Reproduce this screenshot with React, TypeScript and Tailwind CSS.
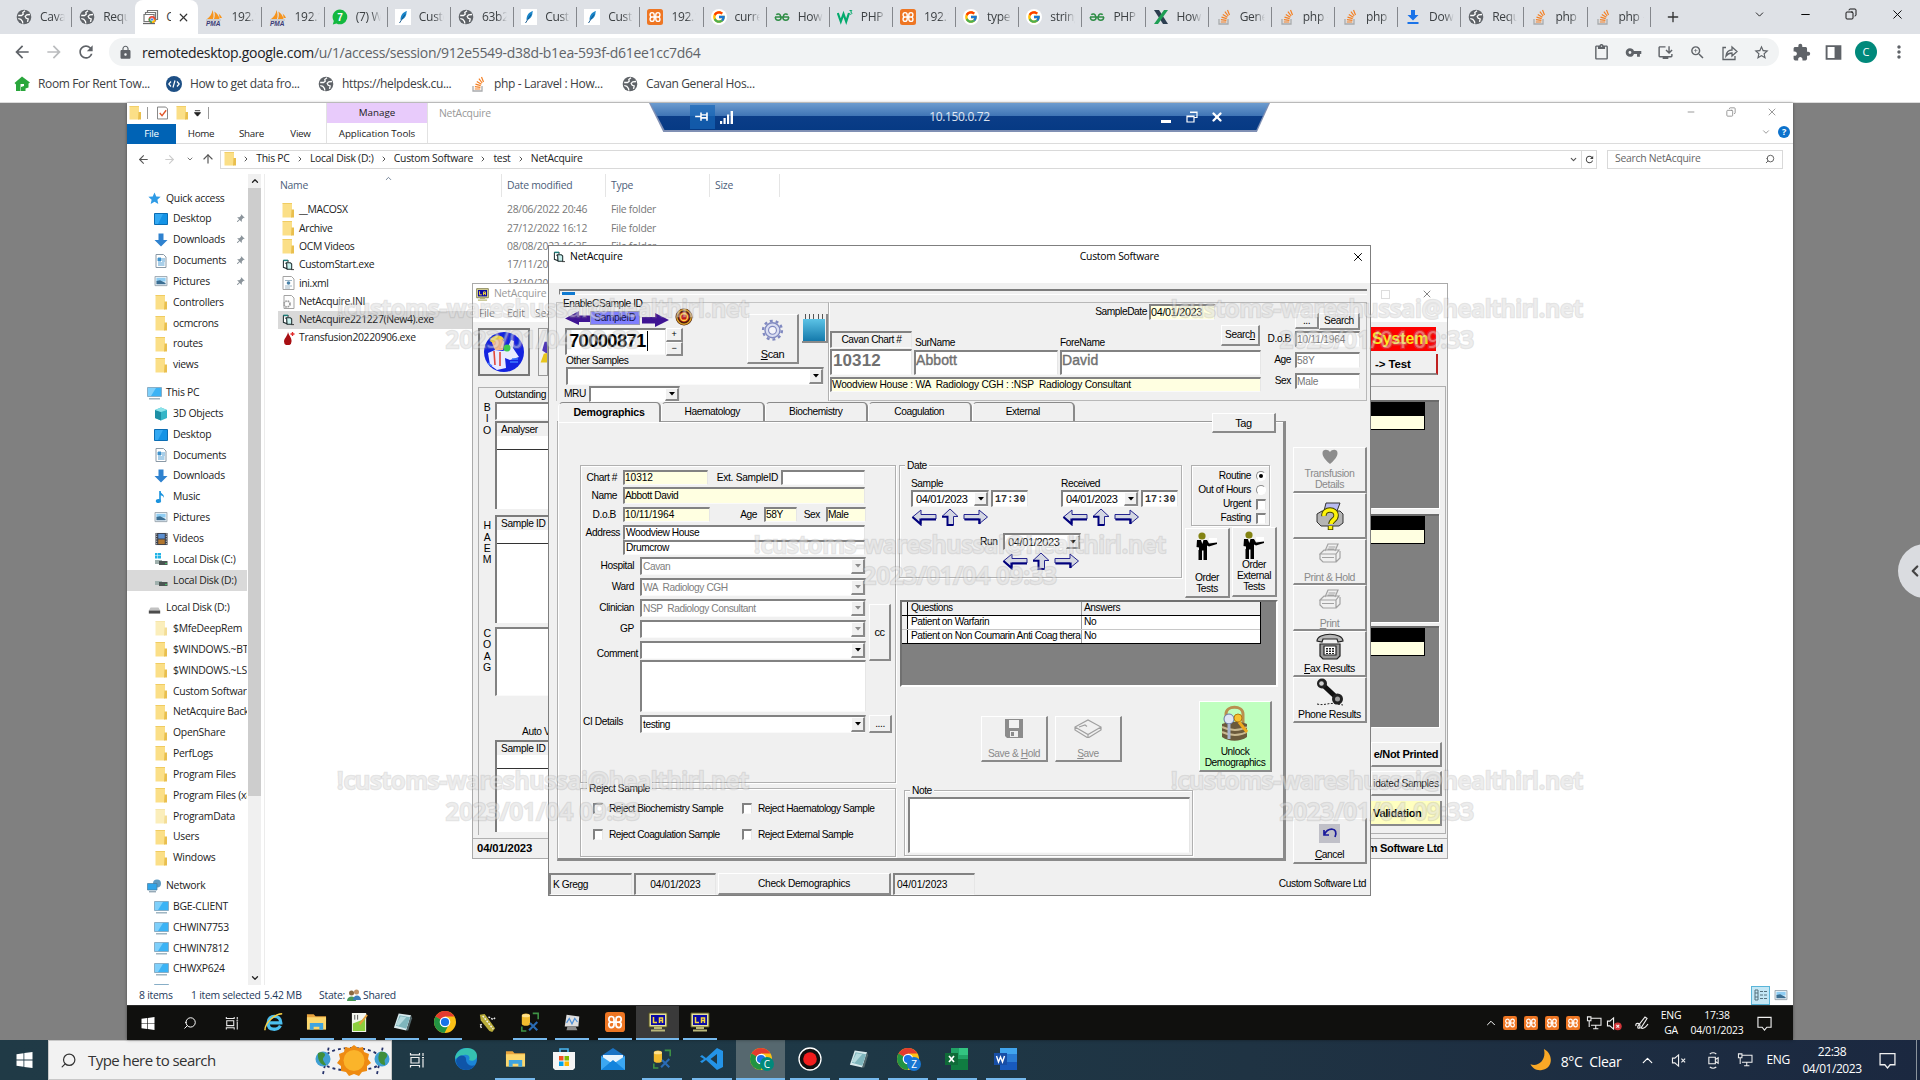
import React from "react";
import { FcGoogle } from "react-icons/fc";
import {
  MdArrowBack, MdArrowForward, MdRefresh, MdLock, MdContentPaste, MdVpnKey, MdInstallDesktop,
  MdZoomIn, MdStarBorder, MdExtension, MdMoreVert, MdPushPin,
} from "react-icons/md";
import { ChevronDown, ChevronUp, ChevronLeft, ChevronRight, Minus, X, Plus, Copy, ArrowLeft, ArrowRight, ArrowUp, Search } from "lucide-react";

type Kids = { children?: React.ReactNode; className?: string };

/* ---------- small drawings ---------- */

const Globe = () => (
  <svg viewBox="0 0 16 16" className="h-4 w-4 shrink-0">
    <circle cx="8" cy="8" r="7.300" fill="#5f6368" />
    <path d="M2.200 6.500h3.300l1.700-1.300-.4-1.700L9 1.800M2.300 9.500l2.500.8 1.700 2.200.3 2M14 5.500l-3.300.3-1.500 1.500 1 2 2 .6-.7 3" fill="none" stroke="#fff" strokeWidth="1.300" />
  </svg>
);

const StackIcon = () => (
  <svg viewBox="0 0 16 16" className="h-4 w-4 shrink-0" fill="none">
    <path d="M3 10v5h9v-5" stroke="#a9abad" strokeWidth="1.300" />
    <path d="M4.800 13h5.500M4.900 10.700l5.500.6M5.500 8.200l5.200 1.500M6.800 5.400l4.600 2.800M8.900 2.700l3.300 4.300M11.500 1l2 5" stroke="#f48024" strokeWidth="1.200" />
  </svg>
);

const Xampp = ({ className = "h-4 w-4" }: Kids) => (
  <svg viewBox="0 0 16 16" className={className + " shrink-0"}>
    <rect width="16" height="16" rx="2.500" fill="#ee7623" />
    <path d="M5 3.600c-2.600 0-2.600 4.400 0 4.400h6c2.600 0 2.600-4.400 0-4.400-1.800 0-2.200 1.400-2.200 2.400v4c0 1 .4 2.400 2.200 2.400 2.600 0 2.600-4.400 0-4.400H5c-2.600 0-2.600 4.400 0 4.400 1.800 0 2.200-1.400 2.200-2.400V6c0-1-.4-2.400-2.200-2.400z" fill="none" stroke="#fff" strokeWidth="1.400" />
  </svg>
);

const Pma = () => (
  <svg viewBox="0 0 18 18" className="h-[18px] w-[18px] shrink-0">
    <path d="M2 11C5 9 7 6 7.500 2c1 3 1.500 6 .5 9zM9 11c1-3 1-5 .3-7.500C12 5 14 8 14.500 11zM14.500 10c0-2-.5-3.500-1-4.500 2 1.500 3 3 3.500 4.500z" fill="#f6941d" />
    <path d="M1 12h15" stroke="#b8b8b8" />
    <text x="1" y="17.500" fontSize="6.500" fontWeight="700" fontStyle="italic" fill="#3b3b75" fontFamily="Liberation Sans">PMA</text>
  </svg>
);

const RdcIcon = () => (
  <svg viewBox="0 0 16 16" className="h-4 w-4 shrink-0" fill="none">
    <path d="M4.500 3V1.500h10v9H13M2.500 5V3.500h10v9" stroke="#777" strokeWidth="1.200" />
    <path d="M1 5.500h10v7H1z" fill="#fff" stroke="#777" strokeWidth="1.200" />
    <path d="M0 14.500h12" stroke="#666" strokeWidth="1.300" />
    <circle cx="9" cy="10.500" r="3.500" fill="#ea4335" />
    <path d="M9 10.500 6 9a3.500 3.500 0 0 0 3 5z" fill="#34a853" />
    <path d="M9 10.500h3.500A3.500 3.500 0 0 1 9 14z" fill="#fbbc05" />
    <circle cx="9" cy="10.500" r="1.500" fill="#4285f4" stroke="#fff" strokeWidth=".6" />
  </svg>
);

const Feather = () => (
  <svg viewBox="0 0 16 16" className="h-4 w-4 shrink-0">
    <rect width="16" height="16" fill="#fff" />
    <path d="M5.500 11C5.500 6 8 3 12 2c-1 2 0 3-1.500 5.500S7.500 10.500 5.500 11z" fill="#1b86c9" />
    <path d="M10 5.500 4.500 14" stroke="#0b4f86" strokeWidth=".9" />
  </svg>
);

const Whats = () => (
  <svg viewBox="0 0 16 16" className="h-4 w-4 shrink-0">
    <path d="M8 .5A7.400 7.400 0 1 1 4.500 14.500L.8 15.500l1-3.600A7.400 7.400 0 0 1 8 .5z" fill="#13b83f" />
    <text x="5.300" y="11.500" fontSize="10" fontWeight="700" fill="#fff" fontFamily="Liberation Sans">7</text>
  </svg>
);

const Gfg = () => (
  <svg viewBox="0 0 16 16" className="h-4 w-4 shrink-0" fill="none" stroke="#2f8d46" strokeWidth="1.500">
    <path d="M1 8h14M7.200 8c0 2-1.200 3.300-3 3.300S1.300 10 1.300 8M6.800 8C6.500 4.500 3.500 4.300 2.300 5.800M8.800 8c0 2 1.200 3.300 3 3.300s2.900-1.300 2.900-3.300M9.200 8c.3-3.500 3.300-3.700 4.500-2.200" />
  </svg>
);

const W3 = () => (
  <svg viewBox="0 0 16 16" className="h-4 w-4 shrink-0" fill="none" stroke="#04aa6d">
    <path d="M.8 4l3 8.500L6.500 5l2.700 7.500L12 4" strokeWidth="2.200" />
    <path d="M12.500 1.500h2.300l-1.200 1.700c2 0 1.600 2.600-.8 2" strokeWidth="1" />
  </svg>
);

const XGreen = () => (
  <svg viewBox="0 0 16 16" className="h-4 w-4 shrink-0">
    <path d="M1 1h5l9 14h-5z" fill="#2c3e50" />
    <path d="M11 1h4L5 15H1z" fill="#1e9e54" />
  </svg>
);

const Dl = () => (
  <svg viewBox="0 0 16 16" className="h-4 w-4 shrink-0" fill="#1a73e8">
    <path d="M6 1h4v5h3.500L8 11.500 2.500 6H6zM2.500 13h11v2h-11z" />
  </svg>
);

const FAV: Record<string, React.ReactNode> = {
  globe: <Globe />, rdc: <RdcIcon />, pma: <Pma />, wa: <Whats />, feather: <Feather />, xampp: <Xampp />,
  g: <span className="flex h-4 w-4 shrink-0 items-center justify-center rounded-full bg-white"><FcGoogle className="h-[14px] w-[14px]" /></span>,
  gfg: <Gfg />, w3: <W3 />, x: <XGreen />, so: <StackIcon />, dl: <Dl />,
};

const Folder = ({ pale = false, className = "h-[15px] w-[12px]" }: { pale?: boolean; className?: string }) => (
  <svg viewBox="0 0 12 15" preserveAspectRatio="none" className={className + " shrink-0"}>
    <path d="M.5.5h9.500v14H.5z" fill={pale ? "#fbeebb" : "#fbdf87"} />
    <path d="M9.500 6.500H12v8H9z" fill={pale ? "#f3dd97" : "#e9bf4e"} />
    <path d="M.5.5h9.500" stroke={pale ? "#f6e6ab" : "#f0cc62"} />
  </svg>
);

const Monitor = () => (
  <svg viewBox="0 0 15 14" className="h-[14px] w-[15px] shrink-0">
    <path d="M.5 1.500h14v9H.5z" fill="#3bb3f5" stroke="#7e9bb0" strokeWidth=".7" />
    <path d="M1 2h8l-5 8H1z" fill="#7fd0fb" />
    <path d="M2 12.800h11" stroke="#8fa9b8" strokeWidth="1.300" />
  </svg>
);
const DesktopI = () => (
  <svg viewBox="0 0 14 12" className="h-[12px] w-[14px] shrink-0"><path d="M.5.5h13v11H.5z" fill="#1493e6" stroke="#0b6db3" /><path d="M1 1h8L4 11H1z" fill="#33a9f3" /></svg>
);
const DownI = () => (
  <svg viewBox="0 0 14 14" className="h-[14px] w-[14px] shrink-0"><path d="M4.500.5h5V7H13.500L7 13.500.5 7h4z" fill="#2f82cf" /></svg>
);
const DocI = () => (
  <svg viewBox="0 0 14 14" className="h-[14px] w-[14px] shrink-0"><path d="M2 .5h7.500L12 3v10.500H2z" fill="#fff" stroke="#8a99a6" /><path d="M4 4h3v3H4zM8 5h3M8 7h3M4 9h6.500M4 11h6.500" fill="#3f92cc" stroke="#3f92cc" strokeWidth=".9" /></svg>
);
const PicI = () => (
  <svg viewBox="0 0 14 12" className="h-[11px] w-[14px] shrink-0"><path d="M.5.5h13v10H.5z" fill="#eef5fa" stroke="#97a3ad" /><path d="M2 2h10v4H2z" fill="#8fcdf3" /><path d="M2 5.500l4-1 6 3V9H2z" fill="#3b6e92" /></svg>
);
const MusicI = () => (
  <svg viewBox="0 0 14 14" className="h-[14px] w-[14px] shrink-0"><path d="M6 1v9" stroke="#1a93de" strokeWidth="1.600" /><ellipse cx="4.500" cy="11" rx="2.700" ry="2.100" fill="#1a93de" /><path d="M6 1c1 3 4.500 3 4 7-.5-2-2-2.500-4-3z" fill="#1a93de" /></svg>
);
const VidI = () => (
  <svg viewBox="0 0 14 14" className="h-[14px] w-[13px] shrink-0"><path d="M.5.500h13v13H.5z" fill="#3a3f4a" /><path d="M3.500 1.500h7v5h-7z" fill="#5b8fd0" /><path d="M3.500 7.500h7v5h-7z" fill="#b1762f" /><path d="M1.800 1v12M12.200 1v12" stroke="#d6d6d6" strokeDasharray="1.300 1.300" /></svg>
);
const DiskI = ({ win = false }: { win?: boolean }) => (
  <svg viewBox="0 0 14 14" className="h-[14px] w-[14px] shrink-0">
    {win && <path d="M1 1h2.500v2.500H1zM4 1h3v2.500H4zM1 4h2.500v2.500H1zM4 4h3v2.500H4z" fill="#21b4e6" />}
    <path d="M1 8h7v4H1z" fill="#9fb0ad" /><path d="M5 9h8.500v4H5z" fill="#4c5553" /><circle cx="12" cy="11.500" r=".8" fill="#3fe06a" />
  </svg>
);
const DriveI = () => (
  <svg viewBox="0 0 13 8" className="mt-[4px] h-[7px] w-[13px] shrink-0"><path d="M2 .5h9L13 4H0z" fill="#c2c2c2" /><path d="M0 4h13v3.500H0z" fill="#4c4c4c" /></svg>
);
const StarI = () => (
  <svg viewBox="0 0 14 14" className="h-[13px] w-[13px] shrink-0"><path d="M7 .5l1.900 4.300 4.700.4-3.500 3.100 1 4.600L7 10.500l-4.100 2.400 1-4.600L.4 5.200l4.700-.4z" fill="#2e9be6" /></svg>
);
const CubeI = () => (
  <svg viewBox="0 0 14 14" className="h-[14px] w-[14px] shrink-0"><path d="M1 3l6-2.500L13 3v8l-6 2.500L1 11z" fill="#35b5c7" /><path d="M1 3l6 2v8.500L1 11z" fill="#1d8fa5" /><path d="M1 3l6-2.500L13 3 7 5z" fill="#8be3ea" /></svg>
);
const NetI = () => (
  <svg viewBox="0 0 15 14" className="h-[14px] w-[15px] shrink-0"><circle cx="10" cy="4.500" r="4" fill="#5f9bc2" /><path d="M.5 4.500h9.500v6.500H.5z" fill="#2fa5ea" stroke="#4a7c9c" strokeWidth=".7" /><path d="M2 12.800h7" stroke="#6b8799" /></svg>
);
const ExeI = () => (
  <svg viewBox="0 0 13 13" className="h-[12px] w-[12px] shrink-0">
    <path d="M1.500 1.500v7.500l4 1.500V4.500h-2M1.500 1.500h5v2" fill="#fff" stroke="#1c2b2d" strokeWidth="1.100" />
    <path d="M5 4h4l1.500 1.500V11H5.500z" fill="#c9f1ee" stroke="#1c2b2d" strokeWidth="1.100" />
    <path d="M1.500 1.500h5" stroke="#1b7f7b" strokeWidth="1.600" /><path d="M10 11.500h3" stroke="#333" />
  </svg>
);
const XmlI = () => (
  <svg viewBox="0 0 13 14" className="h-[14px] w-[13px] shrink-0"><path d="M1 .5h8.500L12 3v10.500H1z" fill="#fff" stroke="#a3a3a3" /><path d="M3 4.500h7M3 10h7M3 12h5" stroke="#9db5c4" /><circle cx="6.500" cy="7" r="1.800" fill="#4781a8" /></svg>
);
const IniI = () => (
  <svg viewBox="0 0 13 14" className="h-[14px] w-[13px] shrink-0"><path d="M2 .5h7.500L12 3v10.500H2z" fill="#fdfdfd" stroke="#a3a3a3" /><circle cx="5" cy="9" r="3" fill="none" stroke="#9a9a9a" strokeWidth="1.700" strokeDasharray="1.600 .8" /></svg>
);
const BloodI = () => (
  <svg viewBox="0 0 13 14" className="h-[14px] w-[13px] shrink-0"><path d="M6 1C7 5 10 7 9.500 10.500a3.600 3.600 0 0 1-7.500 0C2 7.500 5.500 5 6 1z" fill="#a80f13" /><path d="M10.500 1v4M8.500 3h4" stroke="#e02b2b" strokeWidth="1.300" /></svg>
);

const LaIcon = ({ className = "h-[20px] w-[20px]" }: Kids) => (
  <svg viewBox="0 0 20 20" className={className + " shrink-0"}>
    <path d="M1 1h18v14H1z" fill="#e5e09c" stroke="#55531f" />
    <path d="M3 3h14v10H3z" fill="#0909a5" />
    <path d="M5.500 5v5.500H9M11.500 11V6h3v5M11.500 8.500h3" fill="none" stroke="#f5d63c" strokeWidth="1.500" />
    <path d="M6 15h8v2H6zM3 17.500h14v2H3z" fill="#b9b678" />
  </svg>
);
const Chrome = ({ badge, color = "#00897b" }: { badge?: string; color?: string }) => (
  <svg viewBox="0 0 26 26" className="h-[26px] w-[26px] shrink-0">
    <circle cx="13" cy="13" r="11" fill="#fbc116" />
    <path d="M13 13 3.500 7.500A11 11 0 0 1 22.500 7.500H13z" fill="#e33b2e" />
    <path d="M13 13 3.500 7.500A11 11 0 0 0 12.500 24L17 15z" fill="#229342" />
    <circle cx="13" cy="13" r="5.300" fill="#fff" />
    <circle cx="13" cy="13" r="4.100" fill="#1a73e8" />
    {badge && <circle cx="19" cy="18" r="7" fill={color} />}
    {badge && <text x="19" y="21.500" textAnchor="middle" fontSize="10" fill="#fff" fontFamily="Open Sans">{badge}</text>}
  </svg>
);
const Explorer = () => (
  <svg viewBox="0 0 22 20" className="h-[20px] w-[21px] shrink-0"><path d="M1 2h7l2 2h11v5H1z" fill="#e8a33d" /><path d="M1 5h20v13H1z" fill="#fcd76d" /><path d="M4 18v-7h14v7h-4v-3H8v3z" fill="#3fa4e0" /></svg>
);
const Notepad = () => (
  <svg viewBox="0 0 22 22" className="h-[22px] w-[21px] shrink-0"><path d="M7 2l13 2-5 16-13-3z" fill="#d7e9ec" /><path d="M8 4l11 2-4 12-11-3z" fill="#7fb6bd" /><path d="M9 5l6 1-8 9-3-1z" fill="#b5dade" /><path d="M15 20l5-16 1 3-4 13z" fill="#52676b" /></svg>
);
const Ssms = () => (
  <svg viewBox="0 0 22 22" className="h-[22px] w-[20px] shrink-0"><path d="M2 4c0-3 9-3 9 0v9c0 3-9 3-9 0z" fill="#f2bb2e" /><ellipse cx="6.500" cy="4" rx="4.500" ry="1.900" fill="#ffe08a" /><path d="M14 1.500h6V8M2 16v5h5" fill="none" stroke="#3f9445" strokeWidth="1.700" /><path d="M11 12l8 8M19 11l-9 9" stroke="#2a6bb5" strokeWidth="2.300" /></svg>
);
const Windows = ({ className }: Kids) => (
  <svg viewBox="0 0 16 16" className={className} fill="#fff"><path d="M0 2.200 7 1.200v6.400H0zM7.800 1.100 16 0v7.600H7.800zM0 8.400h7v6.400l-7-1zM7.800 8.400H16V16l-8.200-1.100z" /></svg>
);
const TaskView = ({ className = "h-[16px] w-[16px]" }: Kids) => (
  <svg viewBox="0 0 16 16" className={className} fill="none" stroke="#eee" strokeWidth="1.200"><path d="M2 5.500h8v5.500H2zM1.500 1v1.800h9V1M1.500 15.500v-2h9v2M14 1v3M14 6.500v9M13 5.500h2" /></svg>
);
const PcTray = () => (
  <svg viewBox="0 0 18 16" className="h-[14px] w-[16px] shrink-0" fill="none" stroke="#f0f0f0" strokeWidth="1.200"><path d="M6 2.500h11v8H5.500M11 10.500v4M8 14.500h6M1.500 1h4v4.500h-4zM3.500 5.500v7" /></svg>
);
const Speaker = ({ red = false }: { red?: boolean }) => (
  <svg viewBox="0 0 18 16" className="h-[15px] w-[17px] shrink-0" fill="none" stroke="#f0f0f0" strokeWidth="1.200"><path d="M1.500 5.500h2.500L8 2v12l-4-3.500H1.500z" />{red ? <><circle cx="12.500" cy="11" r="4.200" fill="#d13438" stroke="none" /><path d="M11 9.500l3 3M14 9.500l-3 3" /></> : <path d="M11 6l4 4M15 6l-4 4" />}</svg>
);
const Notif = ({ className = "h-[15px] w-[15px]" }: Kids) => (
  <svg viewBox="0 0 16 16" className={className} fill="none" stroke="#f0f0f0" strokeWidth="1.200"><path d="M1 1.500h14v10.500h-4.500L8 15l-2.500-3H1z" /></svg>
);

/* ---------- browser ---------- */

const TABS: [string, string][] = [
  ["globe", "Cavan"], ["globe", "Reque"], ["rdc", "Chr"], ["pma", "192.1"], ["pma", "192.1"], ["wa", "(7) W"], ["feather", "Custo"],
  ["globe", "63b2e"], ["feather", "Custo"], ["feather", "Custo"], ["xampp", "192.1"], ["g", "curren"], ["gfg", "How t"], ["w3", "PHP f"],
  ["xampp", "192.1"], ["g", "type c"], ["g", "string"], ["gfg", "PHP |"], ["x", "How t"], ["so", "Gener"], ["so", "php -"], ["so", "php -"],
  ["dl", "Down"], ["globe", "Reque"], ["so", "php -"], ["so", "php -"],
];

function Browser() {
  return (
    <header className="h-[103px] shrink-0 border-b border-[#dcdcdc] bg-white font-['Open_Sans',sans-serif] text-[#3c4043]">
      <div className="flex h-[34px] items-center bg-[#dee1e6] pl-[9px]">
        {TABS.map(([k, t], i) => {
          const on = i === 2;
          return (
            <div key={i} className={on ? "flex h-[34px] w-[63.150px] shrink-0 items-center rounded-t-lg bg-white pl-[8px]" : "flex h-[34px] w-[63.150px] shrink-0 items-center pl-[7px]"}>
              {FAV[k]}
              <span className={on ? "ml-[7px] w-[5px] overflow-hidden text-[12px] whitespace-nowrap" : "ml-[8px] w-[25px] overflow-hidden text-[12px] tracking-[-0.300px] whitespace-nowrap [mask-image:linear-gradient(90deg,#000_60%,transparent)]"}>{t}</span>
              {on ? <X className="ml-[6px] h-[13px] w-[13px]" strokeWidth={2.200} color="#333" /> : i !== 1 && <span className="ml-auto h-5 w-px bg-[#84878c]" />}
            </div>
          );
        })}
        <Plus className="ml-[14px] h-4 w-4 text-[#333]" />
        <div className="mr-[15px] mb-[6px] ml-auto flex items-center gap-[33px] text-black">
          <ChevronDown className="h-[13px] w-[13px]" strokeWidth={1.500} />
          <Minus className="h-[13px] w-[13px]" strokeWidth={1.800} />
          <Copy className="h-[12px] w-[12px] -scale-x-100" strokeWidth={1.800} />
          <X className="h-[15px] w-[15px]" strokeWidth={1.500} />
        </div>
      </div>
      <div className="flex h-[36px] items-center pl-[12px] text-[#5f6368]">
        <MdArrowBack className="h-5 w-5" />
        <MdArrowForward className="ml-[12px] h-5 w-5 text-[#babcbe]" />
        <MdRefresh className="ml-[12px] h-5 w-5" />
        <div className="ml-[13px] flex h-[28px] w-[1670px] items-center rounded-full bg-[#f1f3f4] pr-[9px] pl-[9px]">
          <MdLock className="h-[15px] w-[15px]" />
          <span className="ml-[9px] text-[14px] tracking-[-0.300px]"><span className="text-[#202124]">remotedesktop.google.com</span>/u/1/access/session/912e5549-d38d-b1ea-593f-d61ee1cc7d64</span>
          <div className="ml-auto flex items-center gap-[15px] text-[17px]">
            <MdContentPaste /><MdVpnKey /><MdInstallDesktop /><MdZoomIn />
            <svg viewBox="0 0 17 17" className="h-[17px] w-[17px]" fill="none" stroke="currentColor" strokeWidth="1.300"><path d="M5 3.500H2v12h12V12M5 12c.5-4 3-6 6-6V3l5 4.500-5 4.500V9c-3 0-4.500 1-6 3z" /></svg>
            <MdStarBorder />
          </div>
        </div>
        <MdExtension className="ml-[13px] h-[19px] w-[19px]" />
        <svg viewBox="0 0 16 16" className="ml-[14px] h-[17px] w-[17px]"><path d="M1.500 2h13v12h-13z" fill="none" stroke="#5f6368" strokeWidth="1.800" /><path d="M9 2h5.500v12H9z" fill="#5f6368" /></svg>
        <span className="ml-[13px] flex h-[22px] w-[22px] items-center justify-center rounded-full bg-[#00897b] text-[11px] text-white">C</span>
        <MdMoreVert className="ml-[12px] h-5 w-5" />
      </div>
      <div className="flex h-[28px] items-center pl-[14px] text-[12px] tracking-[-0.360px]">
        {([
          [<svg viewBox="0 0 16 16" className="h-4 w-4"><path d="M8 .500 16 6.500l-1.500 1v4l-3 1V15H7v-4l3-1V8H6.500v7H2V8.500L.5 7z" fill="#2aa63c" /></svg>, "Room For Rent Tow..."],
          [<svg viewBox="0 0 16 16" className="h-4 w-4"><circle cx="8" cy="8" r="8" fill="#1d4f85" /><path d="M5 5.500 2.800 8 5 10.500M11 5.500 13.200 8 11 10.500M9 4.500l-2 7" stroke="#fff" strokeWidth="1.200" fill="none" /></svg>, "How to get data fro..."],
          [<Globe />, "https://helpdesk.cu..."],
          [<StackIcon />, "php - Laravel : How..."],
          [<Globe />, "Cavan General Hos..."],
        ] as [React.ReactNode, string][]).map(([ic, t]) => (
          <div key={t} className="flex w-[152px] items-center gap-[8px] whitespace-nowrap">{ic}{t}</div>
        ))}
      </div>
    </header>
  );
}

/* ---------- file explorer ---------- */

const NAV: [React.ReactNode, string, number, string?][][] = [
  [[<StarI />, "Quick access", 0], [<DesktopI />, "Desktop", 1, "pin"], [<DownI />, "Downloads", 1, "pin"], [<DocI />, "Documents", 1, "pin"], [<PicI />, "Pictures", 1, "pin"],
    [<Folder />, "Controllers", 1], [<Folder />, "ocmcrons", 1], [<Folder />, "routes", 1], [<Folder />, "views", 1]],
  [[<Monitor />, "This PC", 0], [<CubeI />, "3D Objects", 1], [<DesktopI />, "Desktop", 1], [<DocI />, "Documents", 1], [<DownI />, "Downloads", 1], [<MusicI />, "Music", 1],
    [<PicI />, "Pictures", 1], [<VidI />, "Videos", 1], [<DiskI win />, "Local Disk (C:)", 1], [<DiskI />, "Local Disk (D:)", 1, "sel"]],
  [[<DriveI />, "Local Disk (D:)", 0], [<Folder pale />, "$MfeDeepRem", 1], [<Folder />, "$WINDOWS.~BT", 1], [<Folder />, "$WINDOWS.~LS", 1], [<Folder />, "Custom Software", 1],
    [<Folder />, "NetAcquire Backup", 1], [<Folder />, "OpenShare", 1], [<Folder />, "PerfLogs", 1], [<Folder />, "Program Files", 1], [<Folder />, "Program Files (x86)", 1],
    [<Folder pale />, "ProgramData", 1], [<Folder />, "Users", 1], [<Folder />, "Windows", 1]],
  [[<NetI />, "Network", 0], [<Monitor />, "BGE-CLIENT", 1], [<Monitor />, "CHWIN7753", 1], [<Monitor />, "CHWIN7812", 1], [<Monitor />, "CHWXP624", 1], [<Monitor />, "", 1]],
];

const FILES: [React.ReactNode, string, string, string][] = [
  [<Folder />, "__MACOSX", "28/06/2022 20:46", "File folder"],
  [<Folder />, "Archive", "27/12/2022 16:12", "File folder"],
  [<Folder />, "OCM Videos", "08/08/2022 16:35", "File folder"],
  [<ExeI />, "CustomStart.exe", "17/11/2009 10:24", ""],
  [<XmlI />, "ini.xml", "13/10/2022 11:02", ""],
  [<IniI />, "NetAcquire.INI", "", ""],
  [<ExeI />, "NetAcquire221227(New4).exe", "", ""],
  [<BloodI />, "Transfusion20220906.exe", "", ""],
];

function FileExplorer() {
  return (
    <section className="flex h-[902px] flex-col overflow-hidden bg-white font-['Open_Sans',sans-serif] text-[10.400px] tracking-[-0.260px] text-[#222]">
      <div className="flex h-[41px] shrink-0 border-b border-[#dcdcdc]">
        <div className="flex w-[199px] flex-col">
          <div className="flex h-[20px] items-center pl-[2px]">
            <Folder className="h-[14px] w-[12px]" />
            <span className="ml-[6px] h-[12px] w-px bg-[#999]" />
            <svg viewBox="0 0 12 14" className="ml-[9px] h-[14px] w-[11px]"><path d="M.5.5h9l2 2v11H.5z" fill="#fff" stroke="#777" /><path d="M3 7l2.500 3L10 4" fill="none" stroke="#e0562a" strokeWidth="1.500" /></svg>
            <Folder className="ml-[8px] h-[14px] w-[12px]" />
            <svg viewBox="0 0 8 8" className="ml-[6px] h-[7px] w-[7px]"><path d="M1 .8h6M.5 3h7L4 7z" fill="#222" stroke="#222" /></svg>
            <span className="ml-[7px] h-[12px] w-px bg-[#999]" />
          </div>
          <div className="flex h-[20px] items-center pt-px text-[9.800px]">
            <span className="flex h-[20px] w-[49px] items-center justify-center bg-[#0063b5] pt-px text-white">File</span>
            <span className="w-[50px] pt-px text-center">Home</span>
            <span className="w-[51px] pt-px text-center">Share</span>
            <span className="w-[47px] pt-px text-center">View</span>
          </div>
        </div>
        <div className="w-[102px] border-x border-[#e2e2e2] text-center text-[9.800px] tracking-normal">
          <div className="h-[20px] bg-[#e8cbfb] pt-[2px] leading-[15px]">Manage</div>
          <div className="tracking-[-0.100px] leading-[22px]">Application Tools</div>
        </div>
        <span className="ml-[11px] pt-[3px] leading-[15px] text-[#999]">NetAcquire</span>
        <div className="mr-[15px] ml-auto flex flex-col items-end">
          <div className="flex h-[18px] items-center gap-[30px] text-[#888]">
            <Minus className="h-[10px] w-[10px]" strokeWidth={2} /><Copy className="h-[10px] w-[10px] -scale-x-100" strokeWidth={2} /><X className="h-[12px] w-[12px]" strokeWidth={1.700} />
          </div>
          <div className="-mr-[12px] flex h-[22px] items-center gap-[7px]">
            <ChevronDown className="h-[10px] w-[10px] text-[#888]" />
            <span className="flex h-[12px] w-[12px] items-center justify-center rounded-full bg-[#0d72cc] text-[9px] font-bold text-white">?</span>
          </div>
        </div>
      </div>
      <div className="flex h-[30px] shrink-0 items-center text-[#777]">
        <ArrowLeft className="ml-[10px] h-[13px] w-[13px] text-[#555]" strokeWidth={2} />
        <ArrowRight className="ml-[13px] h-[13px] w-[13px] text-[#ccc]" strokeWidth={2} />
        <ChevronDown className="ml-[10px] h-[8px] w-[8px]" strokeWidth={3} />
        <ArrowUp className="ml-[7px] h-[14px] w-[14px] text-[#555]" strokeWidth={2} />
        <div className="ml-[5px] flex h-[19px] w-[1377px] items-center border border-[#d9d9d9] text-[#222]">
          <Folder className="ml-[3px] h-[14px] w-[12px]" />
          {["This PC", "Local Disk (D:)", "Custom Software", "test", "NetAcquire"].map((t) => (
            <span key={t} className="flex items-center whitespace-nowrap"><ChevronRight className="mr-[6px] ml-[6.300px] h-[8px] w-[8px] text-[#555]" strokeWidth={3} />{t}</span>
          ))}
          <ChevronDown className="ml-auto h-[9px] w-[9px] text-[#555]" strokeWidth={3} />
          <span className="ml-[3px] flex h-[18px] w-[15px] items-center justify-center border-l border-[#d9d9d9]"><MdRefresh className="h-[11px] w-[11px] text-[#444]" /></span>
        </div>
        <div className="ml-[10px] flex h-[19px] w-[176px] items-center justify-between border border-[#d9d9d9] px-[7px] text-[#666]">Search NetAcquire<Search className="h-[10px] w-[10px] -scale-x-100" strokeWidth={2.400} /></div>
      </div>
      <div className="flex h-[811px] shrink-0 overflow-hidden">
        <nav className="h-[811px] w-[120px] shrink-0 overflow-hidden pt-[14px]">
          {NAV.map((g, gi) => (
            <div key={gi} className="mb-[7px]">
              {g.map(([ic, t, d, f], i) => (
                <div key={i} className={f === "sel" ? "flex h-[20.830px] items-center bg-[#d9d9d9]" : "flex h-[20.830px] items-center"}>
                  <span className={d ? "ml-[26px] flex w-[16px] shrink-0 justify-center" : "ml-[20px] flex w-[15px] shrink-0 justify-center"}>{ic}</span>
                  <span className="ml-[4px] whitespace-nowrap">{t}</span>
                  {f === "pin" && <MdPushPin className="mr-[2px] ml-auto h-[10px] w-[10px] shrink-0 rotate-45 text-[#8b949b]" />}
                </div>
              ))}
            </div>
          ))}
        </nav>
        <div className="ml-[1px] flex w-[13px] shrink-0 flex-col items-center bg-[#f0f0f0]">
          <ChevronUp className="my-[2px] h-[10px] w-[10px]" strokeWidth={3} />
          <div className="h-[608px] w-full bg-[#cdcdcd]" />
          <ChevronDown className="mt-auto mb-[2px] h-[10px] w-[10px]" strokeWidth={3} />
        </div>
        <div className="ml-[3px] flex flex-1 flex-col border-l border-[#ececec]">
          <div className="flex h-[23px] shrink-0 items-center text-[#4c607a]">
            <span className="flex h-full w-[237px] items-center border-r border-[#e5e5e5] pl-[15px]">Name<ChevronUp className="mb-[14px] ml-[76px] h-[9px] w-[9px]" /></span>
            <span className="flex h-full w-[104px] items-center border-r border-[#e5e5e5] pl-[5px]">Date modified</span>
            <span className="flex h-full w-[104px] items-center border-r border-[#e5e5e5] pl-[5px]">Type</span>
            <span className="flex h-full w-[70px] items-center border-r border-[#e5e5e5] pl-[5px]">Size</span>
          </div>
          <div className="mt-[4px] ml-[13px] w-[430px]">
            {FILES.map(([ic, n, d, t], i) => (
              <div key={n} className={i === 6 ? "flex h-[18.300px] items-center bg-[#d9d9d9]" : "flex h-[18.300px] items-center"}>
                <span className="ml-[3px] flex w-[14px] justify-center">{ic}</span>
                <span className="ml-[4px] w-[208px] tracking-[-0.340px]">{n}</span>
                <span className="w-[104px] text-[#777]">{d}</span>
                <span className="text-[#777]">{t}</span>
              </div>
            ))}
          </div>
        </div>
      </div>
      <footer className="flex h-[20px] shrink-0 items-center pl-[12px] tracking-[-0.240px] text-[#1e395b]">
        <span className="w-[52px] pt-px">8 items</span><span className="w-[73px] pt-px">1 item selected</span><span className="w-[55px] pt-px">5.42 MB</span><span className="pt-px">State:</span>
        <svg viewBox="0 0 14 13" className="mr-[2px] ml-[2px] h-[13px] w-[14px]"><circle cx="4.500" cy="4" r="2.500" fill="#8a6a42" /><path d="M0 12c0-6 9-6 9 0z" fill="#4a9a56" /><circle cx="9.500" cy="3" r="2.500" fill="#c09368" /><path d="M6 11c0-6 8-6 8 0z" fill="#3c7fbd" /></svg>
        <span className="pt-px">Shared</span>
        <span className="mr-[4px] ml-auto flex h-[19px] w-[19px] items-center justify-center border border-[#59b5d9] bg-[#c4e7f5]">
          <svg viewBox="0 0 14 12" className="h-[12px] w-[14px]" stroke="#55707c" fill="none"><path d="M1 1h3v10H1zM1 4h3M1 8h3M6 2.500h3M10 2.500h3M6 6h3M10 6h3M6 9.500h3M10 9.500h3" /></svg>
        </span>
        <span className="mr-[5px]"><PicI /></span>
      </footer>
    </section>
  );
}

/* ---------- connection bar ---------- */

function ConnectionBar() {
  return (
    <div className="absolute top-0 left-[522px] h-[29px] w-[621px] bg-[#8090b4] [clip-path:polygon(0_0,100%_0,97.900%_100%,2.300%_100%)]">
      <div className="flex h-[27px] items-center bg-[linear-gradient(180deg,#6d9ccf_0%,#3f74b5_48%,#0b3d88_50%,#063a84_100%)] font-['Open_Sans',sans-serif] text-[12px] tracking-[-0.330px] text-white/85 [clip-path:polygon(0.200%_0,99.800%_0,97.800%_100%,2.500%_100%)]">
        <span className="ml-[41px] flex h-[24px] w-[25px] items-center justify-center bg-[#1767b8]/70">
          <svg viewBox="0 0 16 12" className="h-[11px] w-[15px]" fill="#fff"><path d="M0 5.200h6v1.600H0zM5.500 1.500h1.700v9H5.500zM7 3.500h5.500v1.400H7zM7 6.500h5.500v2H7zM12 1.500h1.800v9H12z" /></svg>
        </span>
        <svg viewBox="0 0 14 14" className="ml-[5px] h-[14px] w-[14px]" fill="#fff"><path d="M0 11h2.200v3H0zM3.500 8h2.200v6H3.500zM7 4.500h2.200V14H7zM10.600 1h2.400v13h-2.400z" /></svg>
        <span className="ml-[193px] w-[65px] text-center">10.150.0.72</span>
        <span className="mt-[9px] ml-[169px] h-[3px] w-[10px] bg-white" />
        <svg viewBox="0 0 12 12" className="ml-[15px] h-[12px] w-[12px]" fill="none" stroke="#fff" strokeWidth="1.200"><path d="M4 1h7v5.500H8.500M1 5h7v6H1zM4 1.500h7M1 5.600h7" /></svg>
        <X className="ml-[12px] h-[14px] w-[14px] text-white" strokeWidth={4} />
      </div>
    </div>
  );
}

/* ---------- classic controls ---------- */

const SUNK = "border-t-2 border-l-2 border-r border-b border-t-[#828282] border-l-[#828282] border-r-[#e6e6e6] border-b-[#fafafa]";
const RAISE = "border-t border-l border-r-2 border-b-2 border-t-white border-l-white border-r-[#8a8a8a] border-b-[#8a8a8a] bg-[#f0f0f0]";
const FRAME = "border border-[#b0b0b0] shadow-[1px_1px_0_#fff,inset_1px_1px_0_#fff]";

const Field = ({ children, className = "" }: Kids) => (
  <div className={"flex shrink-0 items-center overflow-hidden whitespace-pre " + SUNK + " " + className}>{children}</div>
);
const Btn = ({ children, className = "" }: Kids) => (
  <button className={"flex shrink-0 items-center justify-center whitespace-nowrap " + RAISE + " " + className}>{children}</button>
);
const Combo = ({ children, className = "", off = false }: Kids & { off?: boolean }) => (
  <div className={"flex shrink-0 items-center justify-between overflow-hidden bg-white whitespace-pre " + SUNK + " " + className}>
    <span className={off ? "pl-[1px] text-[#808080]" : "pl-[1px]"}>{children}</span>
    <span className={"flex h-full w-[14px] shrink-0 items-center justify-center " + RAISE}>
      <svg viewBox="0 0 6 4" className="h-[4px] w-[6px]" fill={off ? "#8c8c8c" : "#000"}><path d="M0 0h6L3 3.600z" /></svg>
    </span>
  </div>
);
const BlueArrow = ({ dir }: { dir: "l" | "u" | "r" }) => (
  <svg viewBox="0 0 26 18" className={dir === "u" ? "mx-[-2px] h-[18px] w-[26px] shrink-0" : "h-[18px] w-[26px] shrink-0"}>
    {dir === "l" && <path d="M1.500 9 10 2v4.500h15v4.500H10V16z" fill="#d4d7e2" stroke="#24248f" strokeWidth="1" />}
    {dir === "l" && <path d="M1.500 9 9.500 16V11.500H25" fill="none" stroke="#00007c" strokeWidth="2.200" />}
    {dir === "r" && <path d="M24.500 9 16 2v4.500H1v4.500h15V16z" fill="#d4d7e2" stroke="#24248f" strokeWidth="1" />}
    {dir === "r" && <path d="M1.500 11.500H16.500V16" fill="none" stroke="#00007c" strokeWidth="2.200" />}
    {dir === "u" && <path d="M13 1 21 8.500h-4.500V17h-6V8.500H5z" fill="#d4d7e2" stroke="#24248f" strokeWidth="1" />}
    {dir === "u" && <path d="M5 8.800h5.500V17h6" fill="none" stroke="#00007c" strokeWidth="2" />}
  </svg>
);
const Printer = () => (
  <svg viewBox="0 0 22 20" className="h-[20px] w-[22px]" fill="none" stroke="#a2a2a2" strokeWidth="1.200"><path d="M6 8 9 1h10l-3 7M1 11l4-4h15l-3 4zM1 11v5l3 3h13V11M17 19l4-4V8M9.500 4h7M8.500 6h7M3 14.500h12" /></svg>
);

/* ---------- background application ---------- */

const GridHead = ({ t, className = "" }: { t: string; className?: string }) => (
  <div className={"w-full border-t-2 border-l-2 border-t-[#7c7c7c] border-l-[#7c7c7c] bg-white " + className}>
    <div className="h-[13px] bg-[#f0f0f0] pl-[4px] leading-[13px] whitespace-nowrap">{t}</div>
    <div className="mt-[13px] h-px bg-[#333]" />
  </div>
);
const Dark = ({ className = "" }: Kids) => (
  <div className={"w-[68px] border-t-2 border-[#6c6c6c] bg-[#808080] shadow-[1px_1px_0_#fff] " + className}>
    <div className="h-[14px] w-[54px] bg-black" />
    <div className="h-[14px] w-[54px] border-r border-b border-black bg-[#ffffe1]" />
  </div>
);
const Letters = ({ t, className = "" }: { t: string; className?: string }) => (
  <div className={"flex flex-col items-center leading-[11.400px] " + className}>{t.split("").map((c, i) => <span key={i}>{c}</span>)}</div>
);

function BackWindow() {
  return (
    <div className="absolute top-[180px] left-[345px] flex h-[576px] w-[976px] flex-col border border-[#aaa] bg-[#f0f0f0] font-['Liberation_Sans',sans-serif] text-[10.200px] tracking-[-0.350px] text-black">
      <div className="flex h-[20px] shrink-0 items-center bg-white pl-[3px] font-['Open_Sans',sans-serif] text-[10.400px] tracking-[-0.200px] text-[#999]">
        <LaIcon className="h-[13px] w-[13px]" /><span className="ml-[5px]">NetAcquire</span>
        <span className="mr-[31px] ml-auto h-[9px] w-[9px] border border-[#ddd]" /><X className="mr-[14px] h-[12px] w-[12px] text-[#777]" strokeWidth={1.800} />
      </div>
      <div className="flex h-[18px] shrink-0 items-center bg-white pt-px pl-[6px] font-['Open_Sans',sans-serif] text-[10.400px] tracking-[-0.200px] text-[#777]">
        <span className="w-[28px]">File</span><span className="w-[28px]">Edit</span><span>Search</span>
      </div>
      <div className="flex h-[516px] justify-between">
        <div className="w-[75px] overflow-hidden">
          <div className="mt-[6px] flex h-[48px]">
            <div className="ml-[5px] flex h-[48px] w-[52px] shrink-0 items-center justify-center border-2 border-[#777] bg-[#ececec]">
              <svg viewBox="0 0 44 42" className="h-[42px] w-[44px]"><circle cx="22" cy="21" r="20" fill="#1423e0" /><path d="M10 12c1-6 11-6 12-1l-1 8h-8z" fill="#f5b98c" /><path d="M8 10c2-7 13-7 14-1l-6-1-5 4z" fill="#f3d73a" /><path d="M6 22l7-3 8 1 4-2 4-9 3 1-1 7 6 9-9 3-5-2 1 10-9 2-7-5z" fill="#e9ebff" /><path d="M12 20l1 14M18 21v14" stroke="#e2473c" strokeWidth="1.600" /><circle cx="25" cy="17" r="3.500" fill="#3cc94e" /><path d="M28 31h8M30 28h6M6 32l4 3" stroke="#3f7bff" strokeWidth="1.500" /></svg>
            </div>
            <div className="ml-[8px] flex h-[48px] w-[20px] items-center justify-center overflow-hidden border border-[#999]"><svg viewBox="0 0 10 30" className="mt-[2px] h-[30px] w-[10px]"><path d="M7 1 4 12l6 4V1z" fill="#5138b8" /><path d="M6 16 2 27h8V15z" fill="#e8c51c" /></svg></div>
          </div>
          <div className="mt-[11px] ml-[5px] flex h-[448px] border-t border-l border-[#b0b0b0]">
            <div className="w-[16px] shrink-0 text-[10.500px]">
              <Letters t="BIO" className="mt-[14px]" /><Letters t="HAEM" className="mt-[84px]" /><Letters t="COAG" className="mt-[62px]" />
            </div>
            <div className="w-[60px] shrink-0">
              <div className="h-[14px] leading-[13px] whitespace-nowrap">Outstanding</div>
              <Field className="h-[18px] w-full bg-white" />
              <GridHead t="Analyser" className="mt-px h-[88px]" />
              <GridHead t="Sample ID" className="mt-[6px] h-[108px]" />
              <Field className="mt-[4px] h-[69px] w-full bg-white" />
              <div className="mt-[28px] h-[15px] pl-[27px] leading-[15px] whitespace-nowrap">Auto Validation</div>
              <GridHead t="Sample ID" className="mt-[1px] h-[92px]" />
            </div>
          </div>
        </div>
        <div className="w-[76px]">
          <div className="mt-[5px] h-[24px] w-[65px] bg-[#fe0000] text-[16px] leading-[24px] font-bold tracking-[-0.100px] text-[#ffe81a]"><span className="ml-[1px]">System</span></div>
          <div className="mt-[3px] flex h-[21px] w-[67px] items-center border-r-2 border-b-2 border-r-[#c02020] border-b-[#888] pt-[2px] pl-[4px] text-[11.500px] font-bold tracking-[-0.100px]">-&gt; Test</div>
          <div className="mt-[11px] h-[448px] w-[75px] border-t border-r border-b border-[#b0b0b0] pt-[13px]">
            <Dark className="h-[108px]" /><Dark className="mt-[6px] h-[108px]" /><Dark className="mt-[4px] h-[101px]" />
            <Btn className="mt-[15px] h-[25px] w-[71px] text-[11px] font-bold tracking-[-0.300px]">e/Not Printed</Btn>
            <Btn className="mt-[4px] h-[25px] w-[71px] pt-px">idated Samples</Btn>
            <div className="mt-[5px] flex h-[25px] w-[71px] items-center border-r-2 border-b-2 border-[#8a8a8a] bg-[#ffffc0] pt-px pl-[2px] text-[11px] font-bold">Validation</div>
          </div>
        </div>
      </div>
      <div className="flex h-[20px] items-center justify-between border-t border-[#b0b0b0] px-[4px] text-[11.300px] font-bold tracking-[-0.150px]"><span>04/01/2023</span><span className="text-[11px] tracking-[-0.300px]">Custom Software Ltd</span></div>
    </div>
  );
}

/* ---------- sample entry dialog ---------- */

const Label = ({ children, className = "" }: Kids) => <span className={"shrink-0 whitespace-nowrap " + className}>{children}</span>;
const U = ({ children }: Kids) => <span className="underline">{children}</span>;

function SamplePane() {
  return (
    <div className="flex h-[99px] w-[273px] shrink-0 flex-col border-t border-r border-l border-t-[#c4c4c4] border-r-[#b0b0b0] border-l-[#c4c4c4]">
      <div className="flex h-[64px]">
        <div className="w-[190px]">
          <div className="-mt-[6px] ml-[6px] h-[13px] w-fit bg-[#f0f0f0] leading-[13px] tracking-[-0.450px]">EnableCSample ID</div>
          <div className="flex h-[16px] items-center">
            <svg viewBox="0 0 25 14" className="ml-[8px] h-[14px] w-[25px]" fill="#3f1493"><path d="M0 7.500 14 0v4.500h11v6.500H14v3z" /></svg>
            <span className="flex h-[14px] w-[50px] items-center justify-center border border-[#9a9ab4] bg-[#8080ff] text-[#10104a]">SampleID</span>
            <svg viewBox="0 0 27 14" className="mt-[3px] ml-[2px] h-[14px] w-[27px]" fill="#3f1493"><path d="M27 7 13 0v4H0v6.500h13V14z" /></svg>
            <svg viewBox="0 0 18 18" className="-mt-[3px] ml-[6px] h-[18px] w-[18px]"><circle cx="9" cy="9" r="8.500" fill="#4b1a08" /><circle cx="9" cy="9" r="7.200" fill="none" stroke="#d9a02a" strokeWidth="1.400" /><circle cx="9" cy="9" r="5" fill="#e03a1c" /><circle cx="9" cy="9" r="3.500" fill="none" stroke="#f5d64a" strokeWidth="1.300" /><path d="M7 7h4v4H7z" fill="#c31414" /></svg>
          </div>
          <div className="mt-[2px] flex h-[27px]">
            <Field className="ml-[8px] h-[27px] w-[101px] bg-white pb-[3px] text-[18.500px] font-bold tracking-[-0.700px]"><span className="border-r border-black pr-[1px] pl-[2px] leading-[20px]">70000871</span></Field>
            <div className="flex flex-col text-[9px]"><Btn className="h-[14px] w-[17px]">+</Btn><Btn className="h-[14px] w-[17px]">−</Btn></div>
          </div>
          <div className="ml-[9px] leading-[12px]">Other Samples</div>
        </div>
        <Btn className="mt-[11px] h-[50px] w-[52px] flex-col pt-[4px] text-[11px]">
          <svg viewBox="0 0 24 24" className="h-[23px] w-[23px]" fill="none" stroke="#8089c0"><circle cx="12" cy="12" r="8" strokeWidth="1.500" fill="#dadef2" /><circle cx="12" cy="12" r="10" strokeWidth="2.600" strokeDasharray="3.100 3.180" /><circle cx="12" cy="12" r="4.200" fill="#f5f5fa" strokeWidth="1.200" /></svg>
          <span className="mt-[4px]"><U>S</U>can</span>
        </Btn>
        <span className="mt-[11px] ml-[3px] flex h-[29px] w-[26px] flex-col border-r-2 border-b-2 border-[#8a8a8a] bg-[#f0f0f0]">
          <span className="mx-[1px] flex h-[5px] justify-around">{[0, 1, 2, 3, 4].map((i) => <i key={i} className="h-[6px] w-px bg-[#555]" />)}</span>
          <span className="mx-px flex-1 bg-[linear-gradient(180deg,#5cc3e6,#1479ab)]" />
        </span>
      </div>
      <Combo className="ml-[9px] h-[18px] w-[258px]" />
      <div className="mt-[1px] flex h-[16px] items-center"><Label className="ml-[7px] w-[25px]">MRU</Label><Combo className="h-[16px] w-[91px]" /></div>
    </div>
  );
}

function PatientPane() {
  return (
    <div className="flex h-[99px] w-[538px] shrink-0 border border-[#b8b8b8] border-l-white">
      <div className="w-[431px] shrink-0">
        <div className="flex h-[17px] items-end justify-end"><Label className="mr-[2px] mb-[1px]">SampleDate</Label><Field className="mr-[46px] h-[16px] w-[66px] bg-[#ffffe1] text-[10.800px] tracking-[-0.300px]">04/01/2023</Field></div>
        <div className="mt-[5px] flex h-[23px] items-end">
          <Field className="h-[17px] w-[82px] justify-center bg-[#f0f0f0]">Cavan Chart #</Field>
          <Label className="mb-[-2px] ml-[3px] w-[145px]">SurName</Label><Label className="mb-[-2px] w-[161px]">ForeName</Label>
          <Btn className="mb-[2px] h-[21px] w-[39px]">Searc<U>h</U></Btn>
        </div>
        <div className="mt-px flex h-[26px] items-end text-[14px] tracking-[0.100px] text-[#707070]">
          <Field className="h-[26px] w-[82px] bg-white pb-[4px] text-[17px] font-bold"><span className="pl-[1px]">10312</span></Field>
          <Field className="ml-[2px] h-[25px] w-[144px] bg-white pb-[6px] [-webkit-text-stroke:0.400px_#707070]">Abbott</Field>
          <Field className="ml-[2px] h-[25px] w-[201px] bg-white pb-[6px] [-webkit-text-stroke:0.400px_#707070]">David</Field>
        </div>
        <Field className="mt-[2px] h-[15px] w-[431px] bg-[#ffffe1] tracking-[-0.240px]">Woodview House : WA  Radiology CGH : :NSP  Radiology Consultant</Field>
      </div>
      <div className="w-[106px]">
        <div className="mt-[10px] flex h-[17px] pl-[34px]"><Btn className="h-[16px] w-[24px]">...</Btn><Btn className="h-[17px] w-[41px]">Search</Btn></div>
        {[["D.o.B", "10/11/1964"], ["Age", "58Y"], ["Sex", "Male"]].map(([l, v], i) => (
          <div key={l} className={i ? "mt-[5px] flex h-[16px] items-center" : "mt-[1px] flex h-[16px] items-center"}>
            <Label className="w-[30px] text-right">{l}</Label><Field className="ml-[4px] h-[16px] w-[65px] bg-white text-[#777] tracking-[-0.200px]">{v}</Field>
          </div>
        ))}
      </div>
    </div>
  );
}

const FormRow = ({ l, children, className = "" }: Kids & { l: string }) => (
  <div className={"flex " + className}><Label className="mr-[6px] w-[53px] self-center text-right">{l}</Label>{children}</div>
);

function Demographics() {
  return (
    <div className={"h-[318px] w-[316px] " + FRAME}>
      <div className="mt-[4px] flex h-[15px] items-center"><Label className="w-[36px] text-right">Chart #</Label><Field className="ml-[6px] h-[15px] w-[85px] bg-[#ffffe1] tracking-[-0.100px]">10312</Field><Label className="w-[70px] text-right tracking-[-0.300px]">Ext. SampleID</Label><Field className="ml-[3px] h-[15px] w-[84px] bg-white" /></div>
      <div className="mt-[2px] flex h-[17px] items-center"><Label className="w-[36px] text-right">Name</Label><Field className="ml-[6px] h-[17px] w-[242px] bg-[#ffffe1]">Abbott David</Field></div>
      <div className="mt-[3px] flex h-[15px] items-center"><Label className="w-[35px] text-right">D.o.B</Label><Field className="ml-[7px] h-[15px] w-[87px] bg-[#ffffe1] tracking-[-0.100px]">10/11/1964</Field><Label className="w-[47px] text-right">Age</Label><Field className="ml-[7px] h-[15px] w-[33px] bg-[#ffffe1]">58Y</Field><Label className="w-[23px] text-right">Sex</Label><Field className="ml-[6px] h-[15px] w-[40px] bg-[#ffffe1]">Male</Field></div>
      <div className="mt-[3px] flex h-[15px] items-center"><Label className="w-[39px] text-right">Address</Label><Field className="ml-[3px] h-[15px] w-[242px] bg-white pl-[1px]">Woodview House</Field></div>
      <Field className="ml-[42px] h-[15px] w-[242px] bg-white pl-[1px]">Drumcrow</Field>
      <div className="mt-[2px] flex">
        <div>
          <FormRow l="Hospital" className="h-[18px]"><Combo off className="h-[18px] w-[226px]">Cavan</Combo></FormRow>
          <FormRow l="Ward" className="mt-[3px] h-[18px]"><Combo off className="h-[18px] w-[226px]">WA  Radiology CGH</Combo></FormRow>
          <FormRow l="Clinician" className="mt-[3px] h-[18px]"><Combo off className="h-[18px] w-[226px]">NSP  Radiology Consultant</Combo></FormRow>
          <FormRow l="GP" className="mt-[3px] h-[18px]"><Combo off className="h-[18px] w-[226px]" /></FormRow>
          <div className="mt-[3px] flex h-[18px]"><Label className="mt-[5px] mr-[2px] w-[57px] text-right">Comment</Label><Combo className="h-[18px] w-[226px]" /></div>
          <Field className="mt-[1px] ml-[59px] h-[52px] w-[226px] bg-white" />
        </div>
        <Btn className="mt-[47px] ml-[3px] h-[57px] w-[22px] text-[11px]">cc</Btn>
      </div>
      <div className="mt-[3px] flex h-[18px]"><Label className="-mt-[1px] ml-[2px] w-[57px]">CI Details</Label><Combo className="h-[18px] w-[226px]">testing</Combo><Btn className="ml-[3px] h-[18px] w-[23px]">....</Btn></div>
    </div>
  );
}

const Check = ({ t, className = "" }: { t: string; className?: string }) => (
  <span className={"flex items-center tracking-[-0.510px] whitespace-nowrap " + className}><i className={"h-[11px] w-[10px] bg-white " + SUNK} /><span className="ml-[6px]">{t}</span></span>
);

const DatePick = ({ className = "" }: Kids) => <Combo className={"h-[17px] w-[78px] text-[11px] tracking-[-0.350px] " + className}><span className="pl-[2px]">04/01/2023</span></Combo>;
const TimeBox = ({ className = "" }: Kids) => <Field className={"h-[17px] w-[37px] bg-white pl-[2px] font-['Liberation_Mono',monospace] text-[10px] font-bold tracking-[0.100px] text-[#333] " + className}>17:30</Field>;
const Arrows = () => <div className="flex w-[78px] items-center gap-[2px]"><BlueArrow dir="l" /><BlueArrow dir="u" /><BlueArrow dir="r" /></div>;

const Waiter = () => (
  <svg viewBox="0 0 24 28" className="h-[28px] w-[24px] shrink-0"><path d="M14 6h8v4h-8z" fill="#fff" /><path d="M2 8h10l2 3.500 8-1v1.500l-8 2.500-2-1v5H4v-3l-2.500-.5z" fill="#000" /><circle cx="7" cy="4" r="3.600" fill="#838313" /><path d="M6 8h2.500l-1.200 4z" fill="#fff" /><path d="M3.500 18h3.500v10H3.500zM8.500 18H12v10H8.500z" fill="#000" /></svg>
);

const Legend = ({ children, className = "" }: Kids) => <div className={"relative -mt-[7px] h-[13px] w-fit bg-[#f0f0f0] px-[2px] leading-[13px] " + className}>{children}</div>;

function RightForm() {
  return (
    <div className="ml-[2px] w-[380px] shrink-0">
      <div className="flex h-[135px]">
        <div className={"h-[113px] w-[283px] " + FRAME}>
          <Legend className="ml-[5px]">Date</Legend>
          <div className="mt-[4px] flex h-[14px]"><Label className="ml-[11px] w-[150px]">Sample</Label><Label>Received</Label></div>
          <div className="flex"><DatePick className="ml-[11px]" /><TimeBox className="ml-[2px]" /><DatePick className="ml-[33px]" /><TimeBox className="ml-[2px]" /></div>
          <div className="mt-[1px] flex h-[18px]"><span className="ml-[11px] w-[151px]"><Arrows /></span><Arrows /></div>
          <div className="mt-[7px] flex h-[17px] items-center"><Label className="ml-[80px] w-[23px]">Run</Label><DatePick /></div>
          <div className="mt-[2px] ml-[102px] flex h-[18px]"><Arrows /></div>
        </div>
        <div className="ml-[3px]">
          <div className={"ml-[6px] flex h-[61px] w-[79px] flex-col pt-[3px] pr-[3px] " + FRAME}>
            {["Routine", "Out of Hours", "Urgent", "Fasting"].map((t, i) => (
              <div key={t} className="flex h-[14px] items-center justify-end">
                <span className="mr-[5px]">{t}</span>
                {i < 2 ? <i className="flex h-[10px] w-[10px] items-center justify-center rounded-full border border-[#8a8a8a] border-r-white border-b-white bg-white">{i === 0 && <i className="h-[4px] w-[4px] rounded-full bg-black" />}</i> : <i className={"h-[11px] w-[10px] bg-white " + SUNK} />}
              </div>
            ))}
          </div>
          <div className="mt-[1px] flex gap-[2px]">
            <Btn className="mt-[1px] h-[70px] w-[45px] flex-col leading-[11px]"><Waiter /><span className="mt-[12px]">Order<br />Tests</span></Btn>
            <Btn className="h-[70px] w-[45px] flex-col leading-[11.300px]"><Waiter /><span>Order<br />External<br />Tests</span></Btn>
          </div>
        </div>
      </div>
      <div className="ml-[1px] h-[87px] w-[378px] border-2 border-[#707070] border-r-white border-b-white bg-[#808080]">
        <div className="w-[359px] border-r border-b border-black bg-white leading-[12px]">
          {[["Questions", "Answers"], ["Patient on Warfarin", "No"], ["Patient on Non Coumarin Anti Coag thera", "No"]].map(([a, b], i) => (
            <div key={a} className={i === 0 ? "flex h-[14px] border-b border-black bg-[#f0f0f0]" : "flex h-[14px] border-b border-[#c8c8c8] last:h-[13px] last:border-0"}>
              <span className="w-[6px] shrink-0 border-r border-black bg-[#f0f0f0]" />
              <span className="w-[174px] shrink-0 overflow-hidden border-r border-[#999] pl-[3px] tracking-[-0.460px] whitespace-nowrap">{a}</span><span className="pl-[2px]">{b}</span>
            </div>
          ))}
        </div>
      </div>
      <div className="mt-[14px] flex h-[71px]">
        <Btn className="mt-[15px] ml-[82px] h-[46px] w-[67px] flex-col text-[#8a8a8a]"><svg viewBox="0 0 18 19" className="h-[19px] w-[18px]"><path d="M0 0h18v19H2l-2-2z" fill="#8c8c8c" /><path d="M4 1h10v8H4zM5 12h8v6H5z" fill="#f0f0f0" /><path d="M6 13h3v4H6z" fill="#8c8c8c" /></svg><span className="mt-[8px] -mb-[3px]">Save &amp; <U>H</U>old</span></Btn>
        <Btn className="mt-[15px] ml-[7px] h-[46px] w-[67px] flex-col text-[#8a8a8a]"><svg viewBox="0 0 28 19" className="h-[19px] w-[28px]" fill="none" stroke="#a0a0a0" strokeWidth="1.200"><path d="M1 8 14 1l13 7v3l-13 8L1 11zM1 8l13 7.500L27 8M14 15.500V19M5 8l6-2 2 1.500" /></svg><span className="mt-[8px] -mb-[3px]"><U>S</U>ave</span></Btn>
        <button className="ml-[77px] flex h-[71px] w-[73px] flex-col items-center border-t border-l border-r-2 border-b-2 border-t-white border-l-white border-r-[#8a8a8a] border-b-[#8a8a8a] bg-[#bfffbf] pt-[3px] leading-[11.300px]">
          <svg viewBox="0 0 28 37" className="h-[37px] w-[28px]"><path d="M5 18V9c0-9 17-9 17 0v9" fill="none" stroke="#b98f4f" strokeWidth="3" /><path d="M1 19c8-3 18-3 25 0v13c-7 5-18 5-25 0z" fill="#6b5a3c" /><path d="M1 22c8 4 18 4 25 0M1 27c8 4 18 4 25 0" stroke="#c9b991" strokeWidth="2" fill="none" /><circle cx="8" cy="14" r="5" fill="#dfe6f4" stroke="#6478a8" /><path d="M8 19v15" stroke="#a9b6cf" strokeWidth="3" /><circle cx="17" cy="13" r="4" fill="#f7c331" stroke="#b47a10" /><path d="M18 17l8 10" stroke="#f0a91e" strokeWidth="3" /></svg>
          <span className="mt-[4px]">Unlock<br />Demographics</span>
        </button>
      </div>
      <div className={"mt-[18px] ml-[5px] h-[66px] w-[289px] " + FRAME}><Legend className="ml-[5px]">Note</Legend><Field className="ml-[3px] h-[56px] w-[282px] bg-white" /></div>
    </div>
  );
}

const SIDE: [React.ReactNode, React.ReactNode, boolean, string][] = [
  [<svg viewBox="0 0 16 15" className="h-[15px] w-[16px]"><path d="M8 15C1 9 .5 6 .5 4 .5 0 6 0 8 3c2-3 7.500-3 7.500 1 0 2-.5 5-7.500 11z" fill="#8c8c8c" /></svg>, <>Transfusion<br />Details</>, true, "mt-[4px]"],
  [<svg viewBox="0 0 28 28" className="h-[28px] w-[28px]"><path d="M10 1h14l-3 8H8z" fill="#b9bbf0" stroke="#333" /><path d="M1 12l5-3h18l3 3v9l-4 3H5l-4-4z" fill="#b5b5b5" stroke="#333" /><path d="M8 14c-1-8 13-8 12 0 0 4-5 4-5 8M14.500 24v4" fill="none" stroke="#444400" strokeWidth="5.500" /><path d="M8 14c-1-8 13-8 12 0 0 4-5 4-5 8M14.500 24v3.200" fill="none" stroke="#fdf40a" strokeWidth="3.600" /></svg>, null, false, ""],
  [<Printer />, "Print & Hold", true, "mt-[9px] -mb-[4px]"],
  [<Printer />, <><U>P</U>rint</>, true, "mt-[9px] -mb-[4px]"],
  [<svg viewBox="0 0 28 27" className="h-[27px] w-[28px]" stroke="#222" strokeWidth="1.200"><path d="M1 8c0-9 26-9 26 0l-5 1-1-3H7L6 9z" fill="#b8b8b8" /><path d="M4 11h20v12l-3 3H7l-3-3z" fill="#9b9b9b" /><path d="M8 13h12v9H8z" fill="#fff" /><path d="M11 15v6M14 15v6M17 15v6" strokeDasharray="1.500 1" strokeWidth="2" /></svg>, <><U>F</U>ax Results</>, false, "mt-[3px]"],
  [<svg viewBox="0 0 28 28" className="h-[28px] w-[28px]"><path d="M6 6l16 15" stroke="#111" strokeWidth="5" /><circle cx="6" cy="5.500" r="5" fill="#222" /><circle cx="5.500" cy="5.500" r="2.300" fill="#d0d0d0" /><circle cx="21.500" cy="21" r="5.500" fill="#222" /><circle cx="21.500" cy="21" r="2.500" fill="#9f9f9f" /><path d="M1 26c8 2 12-2 20 0l6 1" stroke="#222" strokeDasharray="2 1.500" fill="none" /></svg>, "Phone Results", false, "mt-[3px]"],
];

function Dialog() {
  return (
    <div className="absolute top-[142px] left-[421px] flex h-[651px] w-[823px] flex-col border border-[#7f7f7f] bg-[#f0f0f0] font-['Liberation_Sans',sans-serif] text-[10.200px] tracking-[-0.420px] text-black">
      <div className="flex h-[37px] shrink-0 bg-white pt-[3px] pl-[4px] font-['Open_Sans',sans-serif] text-[10.400px] leading-[15px] tracking-[-0.100px]">
        <span className="mt-[2px]"><ExeI /></span><span className="ml-[5px] tracking-[-0.160px]">NetAcquire</span><span className="ml-[457px] tracking-[-0.250px]">Custom Software</span>
        <X className="mt-[1px] mr-[5px] ml-auto h-[14px] w-[14px]" strokeWidth={1.700} />
      </div>
      <div className="mt-[6px] ml-[10px] h-[6px] w-[808px] shrink-0 border-t-2 border-b border-l border-[#7c7c7c] border-b-white pt-px pl-[2px]"><div className="h-[3px] w-[13px] bg-[#0f7ad1]" /></div>
      <div className="mt-[7px] ml-[7px] flex shrink-0"><SamplePane /><PatientPane /></div>
      <div className="mt-[1px] ml-[9px] flex h-[19px] shrink-0">
        {["Demographics", "Haematology", "Biochemistry", "Coagulation", "External"].map((t, i) => (
          <div key={t} className={i === 0 ? "z-10 flex h-[20px] w-[103px] items-center justify-center rounded-t-[5px] border-t border-r-2 border-l border-[#8a8a8a] border-l-white bg-[#f0f0f0] pt-px text-[10.600px] font-bold tracking-[-0.200px]" : "flex h-[19px] w-[103.500px] items-center justify-center rounded-t-[5px] border-t border-r-2 border-l border-[#8a8a8a] border-l-white text-[10.200px]"}>{t}</div>
        ))}
      </div>
      <div className="ml-[8px] flex h-[440px] shrink-0">
        <div className="h-[440px] w-[729px] shrink-0 border-t border-r-[3px] border-b-[3px] border-l border-t-[#9a9a9a] border-r-[#8a8a8a] border-b-[#8a8a8a] border-l-[#b0b0b0] shadow-[inset_1px_1px_0_#fff]">
          <div className="flex h-[43px]"><Btn className="-mt-[9px] ml-[654px] h-[20px] w-[64px] pt-[2px] text-[11px]">Tag</Btn></div>
          <div className="ml-[22px] flex">
            <div className="w-[317px] shrink-0">
              <Demographics />
              <div className={"mt-[5px] h-[69px] w-[316px] " + FRAME}>
                <Legend className="ml-[6px]">Reject Sample</Legend>
                <div className="mt-[6px] flex pl-[12px]"><Check t="Reject Biochemistry Sample" className="w-[149px]" /><Check t="Reject Haematology Sample" /></div>
                <div className="mt-[11px] flex pl-[12px]"><Check t="Reject Coagulation Sample" className="w-[149px]" /><Check t="Reject External Sample" /></div>
              </div>
            </div>
            <RightForm />
          </div>
        </div>
        <div className="ml-[7px] pt-[26px]">
          {SIDE.map(([ic, t, off, gap], i) => (
            <Btn key={i} className={(off ? "text-[#8a8a8a] " : "") + "h-[46px] w-[74px] flex-col text-[10.500px] leading-[11.300px]"}>{ic}<span className={gap}>{t}</span></Btn>
          ))}
          <Btn className="mt-[95px] h-[46px] w-[74px] flex-col pt-[5px] text-[10.200px]">
            <span className="flex h-[20px] w-[21px] items-center justify-center bg-[#c0c0c8]"><svg viewBox="0 0 16 12" className="h-[12px] w-[16px]" fill="none" stroke="#1a1a9c" strokeWidth="1.700"><path d="M2 3v5h5M2 8C6 0 17 0 13 10" /></svg></span>
            <span className="mt-[4px]"><U>C</U>ancel</span>
          </Btn>
        </div>
      </div>
      <div className="mt-auto flex h-[23px] shrink-0 items-center">
        <Field className="h-[22px] w-[83px] border-t border-l-0 pt-px pl-[2px]">K Gregg</Field>
        <Field className="ml-[2px] h-[22px] w-[82px] justify-center border-t border-l pt-px tracking-[-0.050px]">04/01/2023</Field>
        <Btn className="ml-[2px] h-[22px] w-[173px] pt-[2px] text-[10.200px] tracking-[-0.300px]">Check Demographics</Btn>
        <Field className="ml-[2px] h-[22px] w-[82px] border-t border-l pt-px pl-[2px] tracking-[-0.050px]">04/01/2023</Field>
        <span className="mr-[4px] ml-auto pt-px">Custom Software Ltd</span>
      </div>
    </div>
  );
}

/* ---------- watermarks ---------- */

const Mark = ({ className = "" }: Kids) => (
  <div className={"pointer-events-none absolute w-[420px] text-center font-['Noto_Sans','Open_Sans',sans-serif] text-[23.500px] leading-[31px] font-medium tracking-[0.150px] whitespace-nowrap text-white/35 [paint-order:stroke] [-webkit-text-stroke:2.500px_rgba(150,150,150,0.260)] " + className}>
    !customs-wareshussai@healthirl.net<br />2023/01/04 09:33
  </div>
);

/* ---------- task bars ---------- */

function RemoteTaskbar() {
  const items: [React.ReactNode, number][] = [
    [<svg viewBox="0 0 22 22" className="h-[20px] w-[20px]"><path d="M5 12h13.500c0-9.500-14-9.500-14 0s11 8 13.500 3" fill="none" stroke="#4cc0f0" strokeWidth="3.600" /><path d="M1 20C1 12 12 2 20 2" fill="none" stroke="#f5cf45" strokeWidth="1.700" /></svg>, 0],
    [<Explorer />, 1],
    [<svg viewBox="0 0 20 22" className="h-[21px] w-[19px]"><path d="M2 1h15v20H2z" fill="#f3f6ee" /><path d="M3 12l13-5v13H3z" fill="#8ccf3e" /><path d="M5 3v5M8 3v5" stroke="#555" /><path d="M18 3 10 13" stroke="#e6a23c" strokeWidth="2" /></svg>, 1],
    [<Notepad />, 1], [<Chrome />, 1],
    [<svg viewBox="0 0 22 22" className="h-[21px] w-[21px]"><path d="M3 3l5-1 11 15-3 4-3-1L4 9z" fill="#b9ad3a" /><path d="M6 4l11 14M12 5l5 3 2-2M5 13l-2 1 2 3" stroke="#eee" strokeDasharray="2 1.300" strokeWidth="1.500" fill="none" /></svg>, 0],
    [<Ssms />, 1],
    [<svg viewBox="0 0 22 20" className="h-[20px] w-[20px]"><path d="M5 2l14 2-1 11H3z" fill="#dedede" /><path d="M5 11l3-5 3 6 3-6 3 4" fill="none" stroke="#4d8fd6" strokeWidth="1.300" /><path d="M6 15h9l2 4H5z" fill="#8d8d8d" /></svg>, 1],
    [<Xampp className="h-[20px] w-[20px]" />, 1], [<LaIcon />, 2], [<LaIcon />, 1],
  ];
  return (
    <div className="flex h-[35px] items-center border-t border-[#2a2a2a] bg-[#10100e] font-['Open_Sans',sans-serif] text-[10.400px] tracking-[-0.200px] text-white">
      <span className="flex w-[42px] justify-center"><Windows className="h-[13px] w-[14px]" /></span>
      <span className="flex w-[42px] justify-center"><Search className="h-[14px] w-[14px] -scale-x-100" strokeWidth={1.700} /></span>
      <span className="flex w-[42px] justify-center"><TaskView className="h-[14px] w-[14px]" /></span>
      {items.map(([ic, s], i) => (
        <span key={i} className={s === 2 ? "flex h-full w-[42.600px] flex-col items-center bg-[#3a3a3a]" : "flex h-full w-[42.600px] flex-col items-center"}>
          <span className="flex h-[32px] items-center">{ic}</span>
          {s > 0 && <span className={s === 2 ? "h-[2px] w-full bg-[#76b9ed]" : "h-[2px] w-[34px] bg-[#76b9ed]"} />}
        </span>
      ))}
      <div className="mr-[21px] ml-auto flex items-center">
        <ChevronUp className="mr-[5px] h-[14px] w-[14px]" strokeWidth={1.700} />
        <span className="flex gap-[7px]">{[0, 1, 2, 3].map((i) => <Xampp key={i} className="h-[14px] w-[14px]" />)}</span>
        <span className="ml-[6px]"><PcTray /></span><span className="ml-[4px]"><Speaker red /></span>
        <svg viewBox="0 0 14 14" className="ml-[12px] h-[14px] w-[14px]" fill="none" stroke="#eee" strokeWidth="1.200"><path d="M1 10c-1-4 4-3 4 0s-3 3-2 0L10 1l2 1.500L6 12c2 1 5-1 7-4" /></svg>
        <span className="ml-[10px] w-[24px] text-center leading-[15px]">ENG<br />GA</span>
        <span className="ml-[7px] w-[54px] text-center leading-[15px] whitespace-nowrap">17:38<br />04/01/2023</span>
        <Notif className="ml-[13px] h-[15px] w-[15px]" />
      </div>
    </div>
  );
}

function HostTaskbar() {
  const apps: [React.ReactNode, number][] = [
    [<svg viewBox="0 0 24 24" className="h-[24px] w-[24px]"><circle cx="12" cy="12" r="11" fill="#1c85d6" /><path d="M1 12C2-2 23-2 23 9c0 4-5 6-8 4 2-4-2-6-5-5-5 1-8 4-9 4z" fill="#35c1b1" /><path d="M2 14c2-8 10-6 10-2 0 5 4 8 9 6-5 8-18 6-19-4z" fill="#0f55a8" /></svg>, 0],
    [<Explorer />, 1],
    [<svg viewBox="0 0 22 24" className="h-[24px] w-[22px]"><path d="M7 5V2h8v3" fill="none" stroke="#49b5f0" strokeWidth="1.600" /><path d="M0 5h22v16l-2 2H2l-2-2z" fill="#f5f5f5" /><path d="M6 9h4.500v4.500H6z" fill="#f25022" /><path d="M11.500 9H16v4.500h-4.500z" fill="#7fba00" /><path d="M6 14.500h4.500V19H6z" fill="#00a4ef" /><path d="M11.500 14.500H16V19h-4.500z" fill="#ffb900" /></svg>, 0],
    [<svg viewBox="0 0 24 22" className="h-[22px] w-[24px]"><path d="M0 8 12 0l12 8v14H0z" fill="#1b73c4" /><path d="M2 7h20v7H2z" fill="#e9f4fc" /><path d="M0 8l12 8L24 8v14H0z" fill="#3ba7f2" /><path d="M0 22 12 12l12 10z" fill="#1484dc" /></svg>, 0],
    [<Ssms />, 1],
    [<svg viewBox="0 0 24 24" className="h-[24px] w-[24px]"><path d="M17 1l6 3v16l-6 3L6 13l-4 3-2-1.500L4 12 0 9.500 2 8l4 3zM17 7l-6.500 5 6.500 5z" fill="#2493e6" fillRule="evenodd" /></svg>, 1],
    [<Chrome badge="C" />, 2],
    [<svg viewBox="0 0 24 24" className="h-[24px] w-[24px]"><circle cx="12" cy="12" r="11" fill="#111" stroke="#fff" strokeWidth="1.300" /><circle cx="12" cy="12" r="6.800" fill="#f21d1d" /></svg>, 1],
    [<Notepad />, 1], [<Chrome badge="Z" color="#1976d2" />, 1],
    [<svg viewBox="0 0 24 22" className="h-[22px] w-[24px]"><path d="M6 0h17v22H6z" fill="#21a366" /><path d="M14 0h9v7h-9z" fill="#33c481" /><path d="M6 11h17v11H6z" fill="#107c41" /><path d="M0 5h13v12H0z" fill="#0f6b38" /><path d="M4 8l5 6M9 8l-5 6" stroke="#fff" strokeWidth="1.700" /></svg>, 1],
    [<svg viewBox="0 0 24 22" className="h-[22px] w-[24px]"><path d="M6 0h17v7H6z" fill="#41a5ee" /><path d="M6 6h17v8H6z" fill="#2b7cd3" /><path d="M6 14h17v8H6z" fill="#185abd" /><path d="M0 5h13v12H0z" fill="#174ea6" /><path d="M2.500 8l2 6 2-5 2 5 2-6" stroke="#fff" strokeWidth="1.400" fill="none" /></svg>, 1],
  ];
  return (
    <div className="flex h-[40px] shrink-0 items-center bg-[linear-gradient(90deg,#203a46_0%,#1e3846_45%,#1f3343_65%,#1b2840_100%)] font-['Open_Sans',sans-serif] text-white">
      <span className="flex w-[48px] justify-center"><Windows className="h-[16px] w-[17px]" /></span>
      <div className="flex h-[40px] w-[344px] items-center border border-[#c8c8c8] bg-[#f2f2f2] pl-[11px] text-[#333]">
        <Search className="h-[17px] w-[17px] -scale-x-100" strokeWidth={1.700} />
        <span className="mt-px ml-[11px] text-[15px] tracking-[-0.550px]">Type here to search</span>
        <svg viewBox="0 0 78 32" className="ml-auto h-[32px] w-[78px]">
          <path d="M14 10c10-8 40-8 50 0M14 22c10 6 40 6 50 0M10 30l6-28M64 30l6-28" stroke="#26336b" strokeWidth="1.800" strokeDasharray="3 3" fill="none" />
          <circle cx="10" cy="15" r="7.500" fill="#3f9fd3" /><path d="M5 9c5-2 9 1 6 4s1 5 2 8c-4 1-9-4-8-12z" fill="#3f8f3a" />
          <path d="M41 1l4 3 5-1 1 5 5 2-1 5 3 4-4 3v5l-5 1-3 4-5-2-5 2-3-4-5-1v-5l-4-3 3-4-1-5 5-2 1-5 5 1z" fill="#ee8b12" /><circle cx="41" cy="16.500" r="10.500" fill="#fbb42a" />
          <circle cx="69" cy="15" r="7.500" fill="#3f9fd3" /><path d="M67 8c6-1 9 3 6 6s0 5-1 7c-5 0-9-6-5-13z" fill="#3f8f3a" />
        </svg>
      </div>
      <span className="flex w-[49.500px] justify-center"><TaskView className="h-[16px] w-[16px]" /></span>
      {apps.map(([ic, s], i) => (
        <span key={i} className={s === 2 ? "flex h-full w-[49.100px] flex-col items-center bg-[#56686f]" : "flex h-full w-[49.100px] flex-col items-center"}>
          <span className="flex h-[38px] items-center">{ic}</span>
          {s > 0 && <span className={s === 2 ? "h-[2px] w-full bg-[#76b9ed]" : "h-[2px] w-[40px] bg-[#76b9ed]"} />}
        </span>
      ))}
      <div className="mr-[3px] ml-auto flex items-center text-[12px] tracking-[-0.300px]">
        <svg viewBox="0 0 22 23" className="h-[22px] w-[22px]"><path d="M14 0c10 5 10 20-2 22-6 1-10-2-12-6 8 3 17-4 14-16z" fill="#f9a826" /></svg>
        <span className="mt-[2px] ml-[9px] text-[14px] tracking-[-0.300px] whitespace-pre">8°C  Clear</span>
        <ChevronUp className="ml-[18px] h-[17px] w-[17px]" strokeWidth={1.700} />
        <span className="ml-[15px]"><Speaker /></span>
        <svg viewBox="0 0 14 18" className="ml-[19px] h-[17px] w-[13px]" fill="none" stroke="#eee" strokeWidth="1.200"><path d="M2 5.500h7v7H2zM9 8l3-2v6l-3-2M3 2c2-1.500 5-1.500 7 0M3 16c2 1.500 5 1.500 7 0" /></svg>
        <span className="ml-[17px]"><PcTray /></span>
        <span className="ml-[13px]">ENG</span>
        <span className="ml-[12px] w-[60px] text-center leading-[17.500px] tracking-[-0.450px] whitespace-nowrap">22:38<br />04/01/2023</span>
        <Notif className="ml-[17px] h-[17px] w-[17px]" />
        <span className="ml-[20px] h-[40px] w-px bg-[#8a939c]" />
      </div>
    </div>
  );
}

export default function App() {
  return (
    <div className="flex h-[1080px] w-[1920px] flex-col overflow-hidden bg-[#808080]">
      <Browser />
      <main className="relative flex h-[937px] shrink-0 bg-[#808080]">
        <div className="relative ml-[127px] flex h-[937px] w-[1666px] flex-col overflow-hidden shadow-[0_0_3px_rgba(0,0,0,0.4)]">
          <FileExplorer />
          <RemoteTaskbar />
          <ConnectionBar />
          <BackWindow />
          <Dialog />
          <Mark className="top-[190px] left-[206px]" />
          <Mark className="top-[190px] left-[1040px]" />
          <Mark className="top-[426px] left-[623px]" />
          <Mark className="top-[662px] left-[206px]" />
          <Mark className="top-[662px] left-[1040px]" />
        </div>
        <div className="absolute top-[441px] -right-[32px] flex h-[54px] w-[54px] items-center rounded-full bg-[#dadce0] pl-[8px]"><ChevronLeft className="h-[18px] w-[18px] text-[#444]" strokeWidth={3} /></div>
      </main>
      <HostTaskbar />
    </div>
  );
}
